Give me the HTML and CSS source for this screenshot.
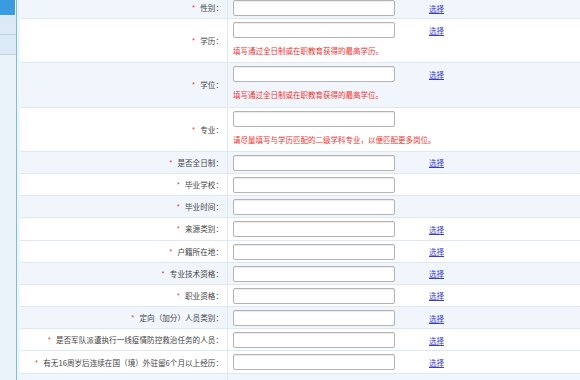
FILE: index.html
```html
<!DOCTYPE html>
<html lang="zh">
<head>
<meta charset="utf-8">
<title>报名信息</title>
<link rel="stylesheet" href="styles.css">
</head>
<body>
<div class="page">
  <aside class="sidebar">
    <div class="side-active"></div>
    <div class="side-item"></div>
    <div class="side-item"></div>
  </aside>
  <main class="main">
    <div class="form">
      <div class="row alt">
        <div class="label"><span class="req">*</span>性别：</div>
        <div class="value"><div class="line"><span class="input"></span><a class="pick" href="#">选择</a></div></div>
      </div>
      <div class="row">
        <div class="label"><span class="req">*</span>学历：</div>
        <div class="value"><div class="line"><span class="input"></span><a class="pick" href="#">选择</a></div><div class="hint">填写通过全日制或在职教育获得的最高学历。</div></div>
      </div>
      <div class="row alt">
        <div class="label"><span class="req">*</span>学位：</div>
        <div class="value"><div class="line"><span class="input"></span><a class="pick" href="#">选择</a></div><div class="hint">填写通过全日制或在职教育获得的最高学位。</div></div>
      </div>
      <div class="row">
        <div class="label"><span class="req">*</span>专业：</div>
        <div class="value"><div class="line"><span class="input"></span></div><div class="hint">请尽量填写与学历匹配的二级学科专业，以便匹配更多岗位。</div></div>
      </div>
      <div class="row alt">
        <div class="label"><span class="req">*</span>是否全日制：</div>
        <div class="value"><div class="line"><span class="input"></span><a class="pick" href="#">选择</a></div></div>
      </div>
      <div class="row">
        <div class="label"><span class="req">*</span>毕业学校：</div>
        <div class="value"><div class="line"><span class="input"></span></div></div>
      </div>
      <div class="row alt">
        <div class="label"><span class="req">*</span>毕业时间：</div>
        <div class="value"><div class="line"><span class="input"></span></div></div>
      </div>
      <div class="row">
        <div class="label"><span class="req">*</span>来源类别：</div>
        <div class="value"><div class="line"><span class="input"></span><a class="pick" href="#">选择</a></div></div>
      </div>
      <div class="row">
        <div class="label"><span class="req">*</span>户籍所在地：</div>
        <div class="value"><div class="line"><span class="input"></span><a class="pick" href="#">选择</a></div></div>
      </div>
      <div class="row alt">
        <div class="label"><span class="req">*</span>专业技术资格：</div>
        <div class="value"><div class="line"><span class="input"></span><a class="pick" href="#">选择</a></div></div>
      </div>
      <div class="row">
        <div class="label"><span class="req">*</span>职业资格：</div>
        <div class="value"><div class="line"><span class="input"></span><a class="pick" href="#">选择</a></div></div>
      </div>
      <div class="row alt">
        <div class="label"><span class="req">*</span>定向（加分）人员类别：</div>
        <div class="value"><div class="line"><span class="input"></span><a class="pick" href="#">选择</a></div></div>
      </div>
      <div class="row">
        <div class="label"><span class="req">*</span>是否军队派遣执行一线疫情防控救治任务的人员：</div>
        <div class="value"><div class="line"><span class="input"></span><a class="pick" href="#">选择</a></div></div>
      </div>
      <div class="row">
        <div class="label"><span class="req">*</span>有无16周岁后连续在国（境）外驻留6个月以上经历：</div>
        <div class="value"><div class="line"><span class="input"></span><a class="pick" href="#">选择</a></div></div>
      </div>
      <div class="row alt">
        <div class="label"></div>
        <div class="value"><div class="line"></div></div>
      </div>
    </div>
  </main>
</div>
</body>
</html>
```

FILE: styles.css
```css
html, body {
  margin: 0;
  padding: 0;
  background: #eef5fb;
  font-family: "Noto Sans CJK SC", "Noto Sans", sans-serif;
  overflow: hidden;
}

.page {
  display: flex;
  height: 380px;
}

.sidebar {
  width: 16px;
  flex: none;
  background: #eaf2fa;
  border-right: 1px solid #7fbbe6;
  margin-right: 1px;
}

.side-active {
  height: 15px;
  width: 15px;
  background: #3b9be0;
}

.side-item {
  height: 19px;
  background: #dce9f6;
  border-bottom: 1px solid #c3d3e3;
}

.main {
  flex: 1;
  padding-left: 2px;
  background: #eef5fb;
}

.form {
  margin-top: -3px;
  background: #ffffff;
}

.row {
  display: grid;
  grid-template-columns: 208px 1fr;
  border-bottom: 1px solid #dde8f2;
  background: #ffffff;
}

.row.alt {
  background: #f0f6fc;
}

.label {
  display: flex;
  align-items: center;
  justify-content: flex-end;
  padding-right: 4px;
  border-right: 1px solid #dde8f2;
  font-size: 7.6px;
  color: #444;
  white-space: nowrap;
}

.req {
  color: #e23b3b;
  margin-right: 5px;
}

.value {
  padding: 3px 0 2.2px 5px;
}

.line {
  display: flex;
  align-items: center;
  height: 16px;
}

.input {
  display: block;
  box-sizing: border-box;
  width: 162px;
  height: 16px;
  background: #fff;
  border: 1px solid #b3b3b3;
  border-radius: 2px;
  box-shadow: inset 0 1px 1px rgba(0, 0, 0, 0.08);
}

.pick {
  margin-left: 34px;
  font-size: 7.5px;
  color: #3b3bd0;
  text-decoration: underline;
}

.hint {
  margin-top: 8px;
  margin-bottom: 4px;
  height: 10px;
  line-height: 10px;
  font-size: 7.5px;
  color: #f03030;
  white-space: nowrap;
}
```
